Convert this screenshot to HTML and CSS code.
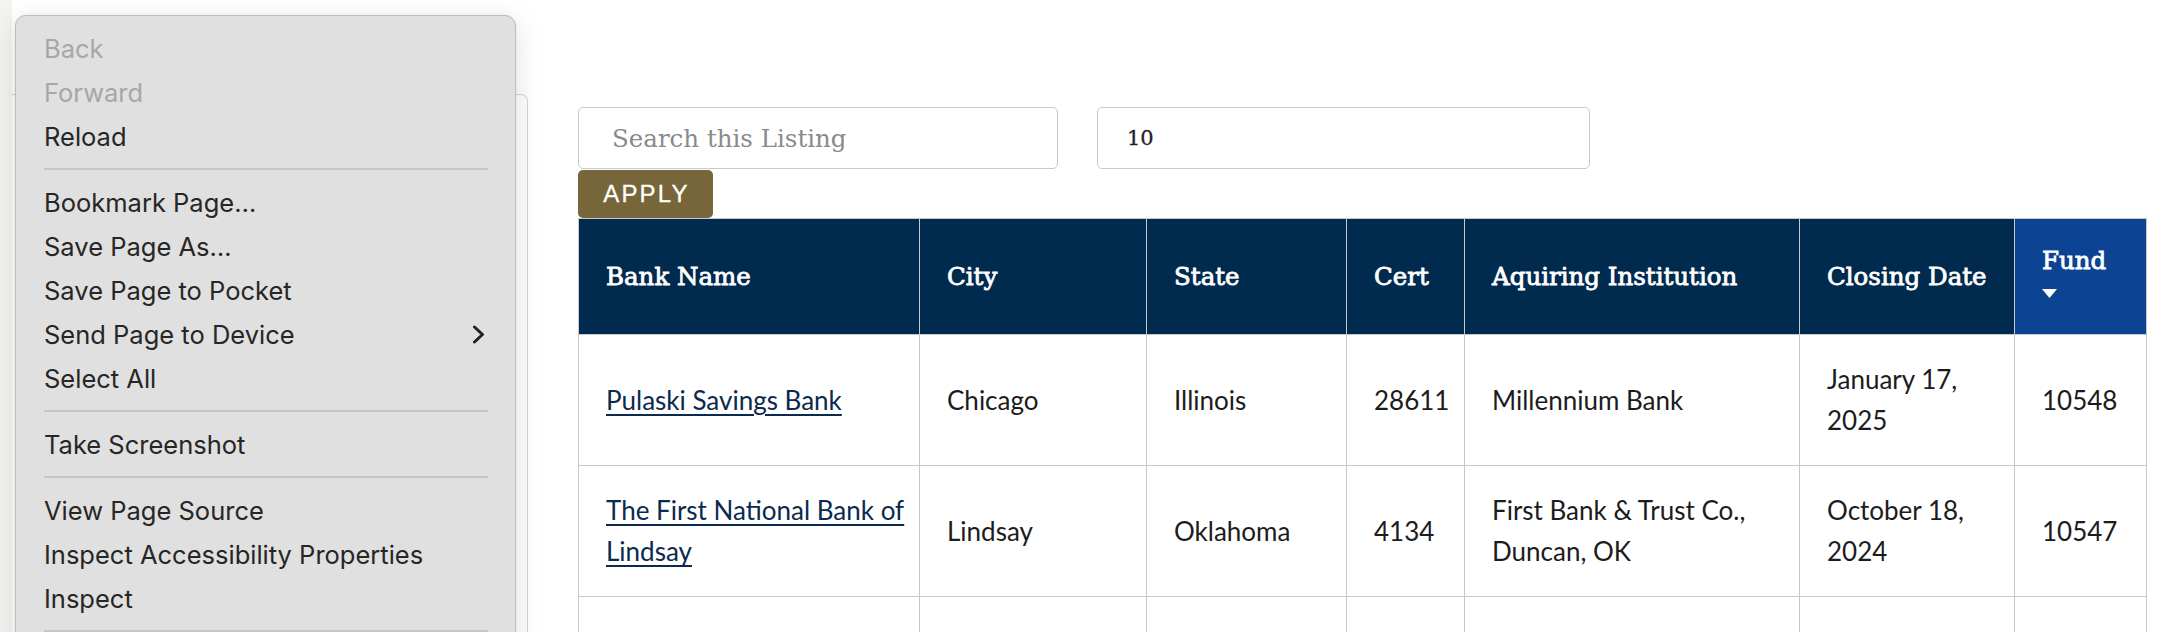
FILE: index.html
```html
<!DOCTYPE html>
<html lang="en">
<head>
<meta charset="utf-8">
<title>Failed Bank List</title>
<link rel="stylesheet" href="styles.css">
</head>
<body>
<div class="page">
  <div class="strip"></div>
  <aside class="sidebar"></aside>
  <main class="content">
    <div class="filters">
      <input class="field search" type="text" placeholder="Search this Listing">
      <input class="field count" type="text" value="10">
    </div>
    <button class="apply" type="button">APPLY</button>
    <table class="banks">
      <colgroup>
        <col class="c-name"><col class="c-city"><col class="c-state"><col class="c-cert"><col class="c-acq"><col class="c-date"><col class="c-fund">
      </colgroup>
      <thead>
        <tr>
          <th>Bank Name</th>
          <th>City</th>
          <th>State</th>
          <th>Cert</th>
          <th>Aquiring Institution</th>
          <th>Closing Date</th>
          <th class="sorted"><span class="fund-h">Fund<svg class="sort-arrow" width="15" height="9" viewBox="0 0 15 9"><path d="M0 0H15L7.5 9Z" fill="#fff"/></svg></span></th>
        </tr>
      </thead>
      <tbody>
        <tr>
          <td class="name"><a href="#">Pulaski Savings Bank</a></td>
          <td>Chicago</td>
          <td>Illinois</td>
          <td>28611</td>
          <td>Millennium Bank</td>
          <td>January 17, 2025</td>
          <td>10548</td>
        </tr>
        <tr>
          <td class="name"><a href="#">The First National Bank of Lindsay</a></td>
          <td>Lindsay</td>
          <td>Oklahoma</td>
          <td>4134</td>
          <td>First Bank &amp; Trust Co., Duncan, OK</td>
          <td>October 18, 2024</td>
          <td>10547</td>
        </tr>
        <tr>
          <td class="name"></td>
          <td></td>
          <td></td>
          <td></td>
          <td></td>
          <td></td>
          <td></td>
        </tr>
      </tbody>
    </table>
  </main>
</div>

<div class="menu" role="menu">
  <div class="item disabled">Back</div>
  <div class="item disabled">Forward</div>
  <div class="item">Reload</div>
  <div class="sep"></div>
  <div class="item">Bookmark Page…</div>
  <div class="item">Save Page As…</div>
  <div class="item">Save Page to Pocket</div>
  <div class="item has-sub">Send Page to Device<svg class="chev" width="13" height="19" viewBox="0 0 13 19"><path d="M2.5 2L10.5 9.5L2.5 17" fill="none" stroke="#222" stroke-width="3" stroke-linecap="round" stroke-linejoin="round"/></svg></div>
  <div class="item">Select All</div>
  <div class="sep"></div>
  <div class="item">Take Screenshot</div>
  <div class="sep"></div>
  <div class="item">View Page Source</div>
  <div class="item">Inspect Accessibility Properties</div>
  <div class="item">Inspect</div>
  <div class="sep"></div>
</div>
</body>
</html>
```

FILE: styles.css
```css
html, body {
  margin: 0;
  padding: 0;
  overflow: hidden;
  background: #ffffff;
}

.page {
  display: grid;
  grid-template-columns: 12px 516px 1fr;
  min-height: 632px;
}

.strip {
  background: #f4f3ef;
}

.sidebar {
  margin-top: 94px;
  border-top: 1px solid #c9d6e3;
  border-right: 1px solid #c9d6e3;
  border-top-right-radius: 7px;
}

.content {
  padding: 107px 0 0 50px;
}

.filters {
  display: flex;
  gap: 39px;
}

.field {
  box-sizing: border-box;
  height: 62px;
  border: 1px solid #c9c9c9;
  border-radius: 5px;
  background: #fff;
  outline: none;
  margin: 0;
}

.search {
  width: 480px;
  padding: 0 0 0 33px;
  font-family: "DejaVu Serif", serif;
  font-size: 24.5px;
  color: #333;
}

.search::placeholder {
  color: #8a8a8a;
}

.count {
  width: 493px;
  padding: 0 0 0 29px;
  font-family: "DejaVu Serif", serif;
  font-size: 21px;
  color: #222;
  -webkit-text-stroke: 0.3px #222;
}

.apply {
  display: block;
  box-sizing: border-box;
  margin: 1px 0 0 0;
  width: 135px;
  height: 48px;
  padding: 0 0 0 2px;
  border: none;
  border-radius: 5px;
  background: #76663a;
  color: #fff;
  font-family: "Liberation Sans", Arial, sans-serif;
  font-size: 24px;
  letter-spacing: 2.2px;
  text-align: center;
  -webkit-text-stroke: 0.3px #fff;
}

.banks {
  border-collapse: collapse;
  table-layout: fixed;
  width: 1568px;
}

.c-name { width: 341px; }
.c-city { width: 227px; }
.c-state { width: 200px; }
.c-cert { width: 118px; }
.c-acq { width: 335px; }
.c-date { width: 215px; }
.c-fund { width: 132px; }

.banks th,
.banks td {
  border: 1px solid #c8c8c8;
  padding: 0 20px 0 27px;
  text-align: left;
  vertical-align: middle;
}

.banks td.name {
  padding-right: 8px;
}

.banks th {
  height: 115px;
  background: #002a4e;
  color: #fff;
  font-family: "DejaVu Serif", serif;
  font-weight: normal;
  font-size: 24.5px;
  line-height: 30px;
  -webkit-text-stroke: 0.8px #fff;
}

.banks th.sorted {
  background: #0c4493;
}

.fund-h {
  display: flex;
  flex-direction: column;
  align-items: flex-start;
  gap: 13px;
  padding-bottom: 9px;
}

.sort-arrow {
  display: block;
}

.banks td {
  height: 130px;
  font-family: Lato, "Liberation Sans", sans-serif;
  font-size: 26px;
  line-height: 41px;
  color: #1c1c1c;
}

.banks a {
  color: #0b2a4e;
  text-decoration: underline;
  text-decoration-thickness: 1.5px;
  text-underline-offset: 4px;
}

/* context menu overlay */
.menu {
  position: absolute;
  left: 15px;
  top: 15px;
  width: 501px;
  height: 700px;
  box-sizing: border-box;
  padding-top: 10px;
  background: #e0e0e0;
  border: 1px solid #bdbdbd;
  border-radius: 11px;
  box-shadow: 0 6px 28px rgba(0, 0, 0, 0.13), 0 0 2px rgba(0, 0, 0, 0.08);
  font-family: Inter, "Liberation Sans", sans-serif;
  font-size: 25.5px;
  color: #262626;
}

.item {
  height: 44px;
  display: flex;
  align-items: center;
  justify-content: space-between;
  padding: 0 30px 0 28px;
}

.item.disabled {
  color: #a7a7a7;
}

.sep {
  height: 2px;
  margin: 10px 27px 10px 28px;
  background: #c6c6c6;
}

.chev {
  display: block;
}
```
